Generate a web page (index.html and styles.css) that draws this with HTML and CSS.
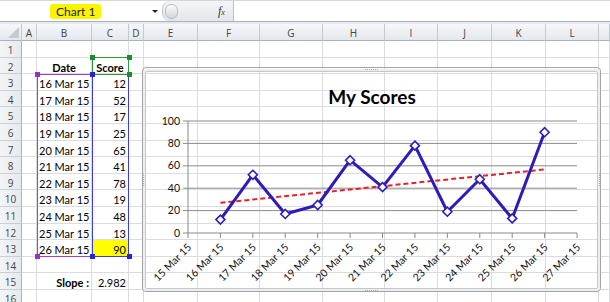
FILE: index.html
```html
<!DOCTYPE html>
<html lang="en">
<head>
    <meta charset="UTF-8">
    <meta name="viewport" content="width=device-width, initial-scale=1.0">
    <title>My Scores</title>
    <link rel="stylesheet" href="styles.css">
</head>
<body>
    <div class="formula-bar">
        <div class="name-box">
            <span class="name-mark">Chart 1</span>
            <span class="drop"></span>
        </div>
        <div class="fx-box">
            <span class="knob"></span>
            <span class="fx"><i>f</i><small>x</small></span>
        </div>
        <div class="formula-input"></div>
    </div>
    <div class="bar-gap"></div>

    <div class="sheet">
        <div class="grid" id="grid"></div>

        <div class="range range-date"></div>
        <div class="range range-score"></div>
        <div class="range range-head"></div>

        <span class="handle h-green" style="left: 90px; top: 31px"></span>
        <span class="handle h-green" style="left: 127px; top: 31px"></span>
        <span class="handle h-purple" style="left: 35px; top: 48px"></span>
        <span class="handle h-blue" style="left: 90px; top: 48px"></span>
        <span class="handle h-green" style="left: 127px; top: 48px"></span>
        <span class="handle h-purple" style="left: 35px; top: 230px"></span>
        <span class="handle h-blue" style="left: 90px; top: 230px"></span>
        <span class="handle h-blue" style="left: 127px; top: 230px"></span>

        <div class="chart">
            <div class="chart-frame">
                <span class="grip grip-top"></span>
                <span class="grip grip-left"></span>
                <span class="grip grip-right"></span>
                <span class="grip grip-bottom"></span>
            </div>
            <svg id="plot" width="459" height="225" viewBox="142 67 459 225"></svg>
        </div>
    </div>

    <script>
        const scores = [12, 52, 17, 25, 65, 41, 78, 19, 48, 13, 90];
        const columns = ['', 'A', 'B', 'C', 'D', 'E', 'F', 'G', 'H', 'I', 'J', 'K', 'L', ''];

        function dayLabel(day) {
            return day + ' Mar 15';
        }

        // cell content by row/column
        function cellFor(row, col) {
            if (row === 2 && col === 2) return { text: 'Date', cls: 'bold center' };
            if (row === 2 && col === 3) return { text: 'Score', cls: 'bold center' };
            if (row >= 3 && row <= 13) {
                const i = row - 3;
                if (col === 2) return { text: dayLabel(16 + i), cls: 'right' };
                if (col === 3) return { text: scores[i], cls: row === 13 ? 'right marked' : 'right' };
            }
            if (row === 15 && col === 2) return { text: 'Slope :', cls: 'bold right' };
            if (row === 15 && col === 3) return { text: '2.982', cls: 'right' };
            return null;
        }

        function renderGrid() {
            const grid = document.getElementById('grid');
            let html = '';
            columns.forEach((name, c) => {
                html += `<div class="head ${c === 0 ? 'corner' : ''}">${name}</div>`;
            });
            for (let row = 1; row <= 16; row++) {
                html += `<div class="head row-head">${row}</div>`;
                for (let col = 1; col < columns.length; col++) {
                    const cell = cellFor(row, col);
                    html += cell
                        ? `<div class="cell ${cell.cls}">${cell.text}</div>`
                        : '<div class="cell"></div>';
                }
            }
            grid.innerHTML = html;
        }

        // chart drawn in page coordinates
        function renderChart() {
            const x0 = 188, dx = 32.42, y0 = 233, ky = 1.12;
            const px = i => x0 + i * dx;
            const py = v => y0 - v * ky;
            let svg = '';

            for (let v = 20; v <= 100; v += 20) {
                svg += `<line class="gridline" x1="183" x2="577" y1="${py(v)}" y2="${py(v)}"/>`;
            }
            for (let v = 0; v <= 100; v += 20) {
                svg += `<text class="ylabel" x="180" y="${py(v) + 3.5}">${v}</text>`;
            }
            svg += `<line class="axis" x1="188" x2="188" y1="${py(100)}" y2="${y0}"/>`;
            svg += `<line class="axis" x1="183" x2="577" y1="${y0}" y2="${y0}"/>`;

            for (let i = 0; i <= 12; i++) {
                const x = px(i);
                svg += `<line class="axis" x1="${x}" x2="${x}" y1="${y0}" y2="${y0 + 5}"/>`;
                svg += `<text class="xlabel" transform="translate(${x + 4} ${y0 + 15}) rotate(-45)">${dayLabel(15 + i)}</text>`;
            }

            // linear trend
            const n = scores.length;
            const mx = (n + 1) / 2;
            const my = scores.reduce((a, b) => a + b, 0) / n;
            let sxy = 0, sxx = 0;
            scores.forEach((s, i) => {
                sxy += (i + 1 - mx) * (s - my);
                sxx += (i + 1 - mx) * (i + 1 - mx);
            });
            const slope = sxy / sxx;
            const t1 = my + (1 - mx) * slope;
            const t2 = my + (n - mx) * slope;
            svg += `<line class="trend" x1="${px(1)}" y1="${py(t1)}" x2="${px(n)}" y2="${py(t2)}"/>`;

            const pts = scores.map((s, i) => `${px(i + 1)},${py(s)}`).join(' ');
            svg += `<polyline class="series" points="${pts}"/>`;
            scores.forEach((s, i) => {
                const x = px(i + 1), y = py(s), r = 4.5;
                svg += `<path class="marker" d="M${x} ${y - r}L${x + r} ${y}L${x} ${y + r}L${x - r} ${y}Z"/>`;
            });

            svg += `<text class="title" x="372" y="104">My Scores</text>`;
            document.getElementById('plot').innerHTML = svg;
        }

        renderGrid();
        renderChart();
    </script>
</body>
</html>
```

FILE: styles.css
```css
body {
    margin: 0;
    padding: 0;
    width: 610px;
    height: 302px;
    overflow: hidden;
    background: #fff;
    font-family: "Lato", "Liberation Sans", sans-serif;
    color: #000;
}

/* formula bar */

.formula-bar {
    display: flex;
    height: 20px;
    border-top: 1px solid #d3d8df;
    border-bottom: 1px solid #a9b2be;
    background: #fff;
}

.name-box {
    position: relative;
    width: 162px;
    display: flex;
    align-items: center;
}

.name-mark {
    margin-left: 50px;
    padding: 0 6px 0 6px;
    height: 15px;
    line-height: 15px;
    background: #f9f400;
    border-radius: 3px;
    font-size: 12px;
    color: #222;
}

.drop {
    position: absolute;
    left: 152px;
    top: 9px;
    border-left: 3px solid transparent;
    border-right: 3px solid transparent;
    border-top: 3px solid #222;
}

.fx-box {
    position: relative;
    width: 70px;
    background: linear-gradient(to bottom, #f4f5f7, #e3e6ea);
    border-left: 1px solid #c2c7ce;
    border-radius: 8px 0 0 8px;
}

.knob {
    position: absolute;
    left: 2px;
    top: 3px;
    width: 11px;
    height: 13px;
    border-radius: 6px;
    background: linear-gradient(to bottom, #fbfbfc, #d2d6dc);
    border: 1px solid #b8bec6;
}

.fx {
    position: absolute;
    left: 55px;
    top: 3px;
    font-family: "Liberation Serif", serif;
    font-size: 12px;
    color: #333;
}

.fx small {
    font-size: 8px;
    font-style: italic;
}

.formula-input {
    flex: 1;
    border-left: 1px solid #b9c0c8;
    background: #fff;
}

.bar-gap {
    height: 2px;
    background: #e6eaef;
}

/* sheet */

.sheet {
    position: relative;
}

.grid {
    display: grid;
    grid-template-columns: 22px 15px 55px 37px 15px 54px 62px 63px 62px 53px 54px 54px 53px 11px;
    grid-template-rows: 17px;
    grid-auto-rows: 16.6px;
}

.cell,
.head {
    box-sizing: border-box;
    border-right: 1px solid #dadcdf;
    border-bottom: 1px solid #dadcdf;
    font-size: 11px;
    line-height: 15px;
    padding: 2px 2px 0;
    white-space: nowrap;
    overflow: hidden;
}

.head {
    background: linear-gradient(to bottom, #f6f7f9, #e4e8ed);
    border-right-color: #c3c9d1;
    border-bottom-color: #a9b3bf;
    color: #444;
    text-align: center;
    font-family: "Open Sans", "Liberation Sans", sans-serif;
    font-size: 10px;
}

.row-head {
    background: linear-gradient(to right, #f3f5f7, #e6e9ee);
    border-bottom-color: #c9cfd6;
    border-right-color: #a9b3bf;
}

.corner {
    position: relative;
}

.corner::after {
    content: "";
    position: absolute;
    right: 2px;
    bottom: 2px;
    border-left: 11px solid transparent;
    border-bottom: 11px solid #c6cbd2;
}

.cell.right {
    text-align: right;
}

.cell.center {
    text-align: center;
}

.cell.bold {
    font-weight: bold;
}

.cell.marked {
    background: #ffff00;
}

/* highlighted ranges */

.range {
    position: absolute;
    box-sizing: border-box;
    border: 1px solid;
}

.range-date {
    left: 37px;
    top: 50px;
    width: 56px;
    height: 183px;
    border-color: #a23fc9;
}

.range-score {
    left: 92px;
    top: 50px;
    width: 37px;
    height: 183px;
    border-color: #3b3be3;
}

.range-head {
    left: 92px;
    top: 33px;
    width: 37px;
    height: 18px;
    border-color: #2f9a3a;
}

.handle {
    position: absolute;
    width: 5px;
    height: 5px;
}

.h-green {
    background: #1f8a2c;
}

.h-blue {
    background: #2525d8;
}

.h-purple {
    background: #9a2fc8;
}

/* chart */

.chart {
    position: absolute;
    left: 142px;
    top: 43px;
    width: 459px;
    height: 225px;
}

.chart-frame {
    position: absolute;
    inset: 0;
    border: 1px solid #a2a6ab;
    border-radius: 4px;
}

.chart-frame::after {
    content: "";
    position: absolute;
    left: 2px;
    right: 2px;
    top: 3px;
    bottom: 2px;
    border: 1px solid #c4c7cb;
    box-shadow: 0 0 0 2px #eceef1;
    border-radius: 2px;
}

.grip {
    position: absolute;
    z-index: 1;
    border-color: #a9adb2;
    border-style: dotted;
    border-width: 0;
}

.grip-top {
    left: 222px;
    top: 1px;
    width: 13px;
    border-top-width: 1px;
}

.grip-bottom {
    left: 222px;
    bottom: 0;
    width: 13px;
    border-bottom-width: 1px;
}

.grip-left {
    left: 0;
    top: 105px;
    height: 13px;
    border-left-width: 1px;
}

.grip-right {
    right: 0;
    top: 105px;
    height: 13px;
    border-right-width: 1px;
}

#plot {
    position: absolute;
    left: 0;
    top: 0;
    font-family: "Lato", "Liberation Sans", sans-serif;
}

.gridline {
    stroke: #8a8a8a;
    stroke-width: 1;
}

.axis {
    stroke: #8a8a8a;
    stroke-width: 1;
}

.ylabel {
    font-size: 10.5px;
    text-anchor: end;
    fill: #111;
}

.xlabel {
    font-size: 10.5px;
    text-anchor: end;
    fill: #111;
}

.trend {
    stroke: #e3222b;
    stroke-width: 2;
    stroke-dasharray: 5 3;
}

.series {
    fill: none;
    stroke: #2d1cb9;
    stroke-width: 3;
    stroke-linejoin: round;
}

.marker {
    fill: #fff;
    stroke: #2d1cb9;
    stroke-width: 1.6;
}

.title {
    font-size: 19px;
    font-weight: bold;
    text-anchor: middle;
    fill: #000;
}
```
